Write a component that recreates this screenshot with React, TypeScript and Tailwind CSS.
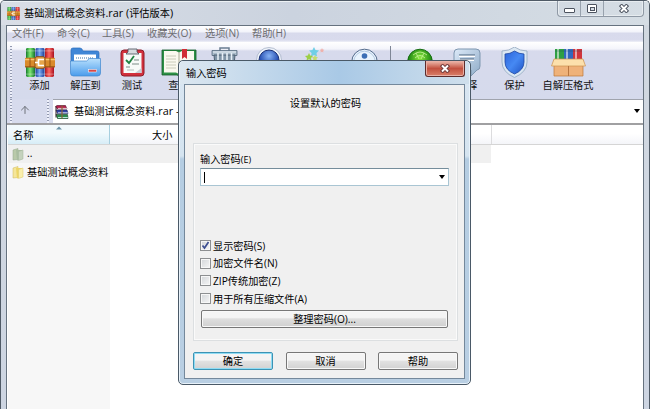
import type { ReactNode } from "react";
import { ArrowUp } from "lucide-react";

const menuItems = [
  { name: "文件(F)", width: "w-[45px]" },
  { name: "命令(C)", width: "w-[45px]" },
  { name: "工具(S)", width: "w-[45px]" },
  { name: "收藏夹(O)", width: "w-[58px]" },
  { name: "选项(N)", width: "w-[47px]" },
  { name: "帮助(H)", width: "w-[45px]" },
];

const options = [
  { label: "显示密码(S)", checked: true },
  { label: "加密文件名(N)", checked: false },
  { label: "ZIP传统加密(Z)", checked: false },
  { label: "用于所有压缩文件(A)", checked: false },
];

function BooksIcon({ className }: { className: string }) {
  return (
    <svg className={className} viewBox="0 0 30 30" preserveAspectRatio="none">
      <defs>
        <linearGradient id="bookGreen">
          <stop offset="0" stopColor="#157a2c" />
          <stop offset=".45" stopColor="#7fe872" />
          <stop offset="1" stopColor="#13752c" />
        </linearGradient>
        <linearGradient id="bookBlue">
          <stop offset="0" stopColor="#1b3f9c" />
          <stop offset=".45" stopColor="#78aaf2" />
          <stop offset="1" stopColor="#1c3c94" />
        </linearGradient>
        <linearGradient id="bookRed">
          <stop offset="0" stopColor="#ad1420" />
          <stop offset=".45" stopColor="#ff6a62" />
          <stop offset="1" stopColor="#a8101f" />
        </linearGradient>
      </defs>
      <rect x="1" y="0" width="9" height="30" rx="1.500" fill="url(#bookGreen)" />
      <rect x="10.5" y="0" width="9" height="30" rx="1.500" fill="url(#bookBlue)" />
      <rect x="20" y="0" width="9" height="30" rx="1.500" fill="url(#bookRed)" />
      <path d="M1 3h28M1 27h28" stroke="#fff" strokeOpacity=".35" />
      <rect y="10" width="30" height="10" rx="1" fill="#d98a2b" />
      <path d="M0 12h30" stroke="#f6c572" strokeWidth="1.5" />
      <path d="M0 19.500h30" stroke="#8f4a12" />
      <path d="M5 10v10M25 10v10" stroke="#93500f" />
      <rect x="10" y="9" width="10" height="12" rx="2" fill="#e6a54a" stroke="#8a4a12" />
      <path d="M19 12h-5.500v6H19M14 15h-4" fill="none" stroke="#fff" strokeWidth="1.600" />
    </svg>
  );
}

function RarIcon({ className }: { className: string }) {
  return (
    <svg className={className} viewBox="0 0 14 14">
      <path d="M.5 1.500 2 .500h8.500l1.500 3.500H2.500z" fill="#b31f4c" stroke="#4a1025" strokeWidth=".6" />
      <path d="M3 3.400h9" stroke="#fff" strokeWidth=".8" />
      <path d="M1 5h11l1 3.500H2.500z" fill="#3346a8" stroke="#141c55" strokeWidth=".6" />
      <path d="M3 7.800h9.800" stroke="#fff" strokeWidth=".8" />
      <path d="M1 9.500h11.500l.5 4H2.500z" fill="#2b8a4d" stroke="#0e3d20" strokeWidth=".6" />
      <path d="M3 12.500h9.800" stroke="#dff" strokeWidth=".8" />
      <path d="M1 1.500v11" stroke="#33202a" strokeWidth="1" />
      <path d="M7 .5v13" stroke="#8d6436" strokeWidth="1.200" />
    </svg>
  );
}

function ExtractIcon() {
  return (
    <svg className="h-[30px] w-[31px]" viewBox="0 0 31 30">
      <defs>
        <linearGradient id="folder" x2="0" y2="1">
          <stop offset="0" stopColor="#b9e0fd" />
          <stop offset="1" stopColor="#4a9cec" />
        </linearGradient>
      </defs>
      <path d="M1 3q0-2 2-2h7q2 0 3 3h14q2 0 2 2v9H1z" fill="#3f86d6" stroke="#2a6dbb" strokeWidth=".7" />
      <path d="M4 7.500h22V16H4z" fill="#fff" />
      <path d="M6 11h18" stroke="#9bb7d1" strokeWidth="2" strokeDasharray="1 1" />
      <path d="M.5 14h16l3-2.500h11v14.500q0 3-3 3h-24q-3 0-3-3z" fill="url(#folder)" stroke="#3f86cf" strokeWidth=".7" />
      <rect x="18.500" y="22.500" width="8" height="2.500" fill="#d84848" stroke="#fff" strokeWidth=".5" />
    </svg>
  );
}

function TestIcon() {
  return (
    <svg className="h-[29px] w-[25px]" viewBox="0 0 25 29">
      <rect x="1" y="2" width="23" height="26" rx="3" fill="#d3303c" stroke="#8e1c28" />
      <rect x="3.500" y="5" width="18" height="20" fill="#f7faf8" />
      <path d="M8 1h9v3l2 2H6l2-2z" fill="#d7dbdf" stroke="#4a4f59" strokeWidth=".8" />
      <path d="m6 12 3 3 5-7" fill="none" stroke="#218343" strokeWidth="1.800" />
      <path d="M14 12h5M12 16h7M6 19h4" stroke="#7d8d88" />
      <path d="M7 22h7" stroke="#b4c0bc" />
      <path d="M21.500 20v5H15z" fill="#c8ced5" />
    </svg>
  );
}

function ViewIcon() {
  return (
    <svg className="h-[28px] w-[36px]" viewBox="0 0 36 28">
      <path d="M1 2h34v25H20l-2 1-2-1H1z" fill="#2e9147" stroke="#145a28" strokeWidth=".8" />
      <path d="M3 3h12l3 1.500V26l-3-1.500H3zM33 3H21l-3 1.500V26l3-1.500h12z" fill="#faf9ef" />
      <path d="M18 4v22" stroke="#a8aa94" />
      <path d="M5 8h10M5 11h10M5 14h10M5 17h10M5 20h10M21 13h10M21 16h10M21 19h10" stroke="#bfc2ad" strokeWidth=".8" />
      <path d="M21 1h5v10l-2.500-2-2.500 2z" fill="#d12d35" />
    </svg>
  );
}

function DeleteIcon() {
  return (
    <svg className="h-[30px] w-[27px]" viewBox="0 0 27 30">
      <path d="M9 4V1h9v3" fill="none" stroke="#6a7d91" strokeWidth="1.500" />
      <path d="M1 3.500h25v5H1z" fill="#a9bac9" stroke="#566b7e" strokeWidth=".8" />
      <path d="M2 5h23" stroke="#eef5fa" />
      <path d="M3 8h21l-2 21H5z" fill="#8296a8" stroke="#4c6072" />
      <path d="M7 6v22M11.500 6v22M16 6v22M20.500 6v22" stroke="#e7eff6" strokeWidth="1.600" />
    </svg>
  );
}

function FindIcon() {
  return (
    <svg className="h-[30px] w-[26px]" viewBox="0 0 26 30">
      <defs>
        <radialGradient id="lens" cy=".3">
          <stop offset="0" stopColor="#86b2f4" />
          <stop offset="1" stopColor="#2149ae" />
        </radialGradient>
      </defs>
      <circle cx="13" cy="13" r="12.500" fill="#eef3fa" stroke="#a6b1c5" strokeWidth=".8" />
      <circle cx="13" cy="13" r="10" fill="url(#lens)" stroke="#1c3276" />
    </svg>
  );
}

function WizardIcon() {
  return (
    <svg className="h-[30px] w-[30px]" viewBox="0 0 30 30">
      <path d="m14 0 1.500 3 3.500.500-2.500 2.500.5 3.500-3-1.600-3 1.600.6-3.500L9 3.500l3.400-.5z" fill="#6fcfe6" />
      <path d="m9 6 1.200 2.500 2.800.4-2 2 .5 2.600L9 12.200l-2.500 1.300.5-2.600-2-2 2.800-.4z" fill="#9ccf45" />
      <path d="m22 1 .7 1.500 1.600.2-1.200 1.200.3 1.600-1.400-.8-1.500.8.3-1.600-1.100-1.200 1.600-.2z" fill="#efb1ac" />
      <path d="m15 8 1 2 2 .3-1.500 1.500.5 2.200-2-1-2 1 .4-2.200L12 10.300l2-.3z" fill="#c5dc6d" />
    </svg>
  );
}

function InfoIcon() {
  return (
    <svg className="h-[29px] w-[27px]" viewBox="0 0 27 29">
      <circle cx="13.500" cy="14" r="12.800" fill="#e9f3fd" stroke="#51698a" />
      <circle cx="13.500" cy="14" r="10.800" fill="none" stroke="#b4cbe4" />
      <circle cx="13.500" cy="8" r="2.800" fill="#3c6fb5" />
      <path d="M11 13h5v11h-5z" fill="#3c6fb5" />
    </svg>
  );
}

function ScanIcon() {
  return (
    <svg className="h-[29px] w-[26px]" viewBox="0 0 26 29">
      <defs>
        <radialGradient id="virus" cy=".35">
          <stop offset="0" stopColor="#8be83f" />
          <stop offset="1" stopColor="#17820f" />
        </radialGradient>
      </defs>
      <circle cx="13" cy="13.500" r="12.300" fill="url(#virus)" stroke="#176d13" />
      <path d="M6 7q7-6 14 0M8 10q5-5 10 0M9 5l3 6M17 5l-3 6" fill="none" stroke="#c9f59a" strokeWidth=".8" />
    </svg>
  );
}

function CommentIcon() {
  return (
    <svg className="h-[30px] w-[28px]" viewBox="0 0 28 30">
      <defs>
        <linearGradient id="note" x2="1" y2="1">
          <stop offset="0" stopColor="#dce9f8" />
          <stop offset="1" stopColor="#8facc8" />
        </linearGradient>
      </defs>
      <path d="M5 2h18q4 0 4 4v13q0 4-3 4l-6 6v-6H5q-4 0-4-4V6q0-4 4-4z" fill="url(#note)" stroke="#7f97b0" />
      <path d="M6 9h16M7 13h14" stroke="#fff" strokeWidth="2" />
      <path d="M6 8h16M7 12h14" stroke="#4a6480" strokeWidth="1.100" />
    </svg>
  );
}

function ProtectIcon() {
  return (
    <svg className="h-[31px] w-[27px]" viewBox="0 0 27 31">
      <defs>
        <linearGradient id="shield" x2="1" y2="1">
          <stop offset="0" stopColor="#2b63d9" />
          <stop offset=".5" stopColor="#4689f3" />
          <stop offset="1" stopColor="#2053c4" />
        </linearGradient>
      </defs>
      <path d="M13.500 0Q19 4 26 4v11q0 10-12.500 15.500Q1 25 1 15V4q7 0 12.500-4z" fill="#dbe7f2" stroke="#93a8bf" strokeWidth=".8" />
      <path d="M13.500 4Q18 7 23 7v8q0 8-9.500 12Q4 23 4 15V7q5 0 9.500-3z" fill="url(#shield)" stroke="#1e46a2" strokeWidth=".8" />
    </svg>
  );
}

function SfxIcon() {
  return (
    <svg className="h-[29px] w-[35px]" viewBox="0 0 35 29">
      <rect x="4" y="1" width="9" height="12" fill="#2f9f43" />
      <rect x="13" y="1" width="9" height="12" fill="#3268bd" />
      <rect x="22" y="1" width="9" height="12" fill="#cf343c" />
      <path d="M7 1v10M16 1v10M25 1v10" stroke="#fff" strokeOpacity=".55" strokeWidth="2" />
      <path d="M4 3h27" stroke="#1e4459" strokeOpacity=".35" />
      <path d="M3 12h29v16H3z" fill="#efb27a" stroke="#bd7638" strokeWidth=".7" />
      <path d="M3 11h29l2.500 7H.5z" fill="#fce0ac" stroke="#cb914f" strokeWidth=".7" />
      <path d="M17.500 18v10" stroke="#b87641" />
    </svg>
  );
}

function FolderIcon({ up }: { up?: boolean }) {
  return (
    <svg className="h-[13px] w-[12px]" viewBox="0 0 12 13">
      <path d="M1 2 6 .500v11L1 12z" fill={up ? "#b9caaa" : "#f5e69a"} stroke={up ? "#91a58a" : "#cdb75b"} strokeWidth=".5" />
      <path d="M4 2h6v9l-5 1.500z" fill={up ? "#a9bda0" : "#ecd565"} />
      <path d="M6.500 3.500 11 2v9l-4.500 1.500z" fill={up ? "#c4d2bd" : "#faefad"} stroke={up ? "#a3b69b" : "#dcc86a"} strokeWidth=".5" />
    </svg>
  );
}

function CloseGlyph({ className, outline, fill = "#fff" }: { className: string; outline: string; fill?: string }) {
  return (
    <svg className={className} viewBox="0 0 10 9">
      <path d="M1.300 .8 8.700 8.200M8.700 .8 1.300 8.200" stroke={outline} strokeWidth="3.800" />
      <path d="M2 1.500 8 7.500M8 1.500 2 7.500" stroke={fill} strokeWidth="1.900" />
    </svg>
  );
}

function Tool({ icon, label, width }: { icon: ReactNode; label?: string; width: string }) {
  return (
    <div className={`${width} flex shrink-0 flex-col items-center`}>
      <div className="flex h-[32px] items-center justify-center">{icon}</div>
      {label && <span className="text-[10.2px] leading-[14px] text-[#111]">{label}</span>}
    </div>
  );
}

function Grip({ className }: { className: string }) {
  return <div className={`${className} w-[2px] shrink-0 bg-[repeating-linear-gradient(#9299b0_0_1px,#eef0fa_1px_3px)]`} />;
}

function DialogButton({ children, primary }: { children: ReactNode; primary?: boolean }) {
  return (
    <button
      className={`h-[18px] w-[80px] rounded-[2px] border bg-linear-to-b from-[#f4f4f4] from-45% via-[#e2e2e2] via-50% to-[#d2d2d2] leading-[16px] ${
        primary ? "border-[#3c93b4] shadow-[inset_0_0_0_1px_#8fdcf4]" : "border-[#777] shadow-[inset_0_0_0_1px_#f8f8f8]"
      }`}
    >
      {children}
    </button>
  );
}

function PasswordDialog() {
  return (
    <div className="absolute top-[59px] left-[177px] flex h-[325px] w-[293px] flex-col rounded-[5px] border border-[#4a5967] bg-[linear-gradient(#d9e6f2_0,#d5e4f0_95px,#b5cde2_98px,#b9cfe3_100%)] px-[5px] pb-[5px] shadow-[inset_0_0_0_1px_#e8f2fa]">
      <div className="mx-[-4px] flex h-[23px] shrink-0 justify-between rounded-t-[4px] bg-linear-to-r from-[#dce7f0] via-[#a9c9e6] via-55% to-[#cfdfec] pr-[4px] pl-[6px]">
        <span className="pt-[4px] text-[10.2px] leading-[16px]">输入密码</span>
        <button className="flex h-[16px] w-[40px] items-center justify-center rounded-b-[3px] border border-t-0 border-[#5c2c2c] bg-linear-to-b from-[#e5a698] from-10% via-[#c2503f] via-50% to-[#d9806a] shadow-[inset_0_0_0_1px_#e9b0a5]">
          <CloseGlyph className="h-[9px] w-[10px]" outline="#703c3c" />
        </button>
      </div>

      <div className="flex flex-1 flex-col border border-[#74889b] bg-[#f0f0f0] pr-[6px] pl-[8px]">
        <p className="h-[58px] pt-[10px] text-center text-[10.200px] leading-[16px]">设置默认的密码</p>

        {/* Password options */}
        <div className="h-[198px] border border-[#dcdfe1] px-[6px] pt-[8px] shadow-[inset_0_0_0_1px_#fafafa]">
          <p className="h-[16px] leading-[14px]">
            输入密码<span className="text-[9px]">(E)</span>
          </p>
          <div className="flex h-[18px] w-[249px] items-center justify-between border border-[#a9c5d3] border-t-[#758d9b] bg-white pr-[3px] pl-[3px]">
            <span className="h-[11px] w-px bg-black" />
            <span className="h-0 w-0 border-x-[3.500px] border-t-[4px] border-x-transparent border-t-black" />
          </div>

          <div className="mt-[51px] flex flex-col">
            {options.map((option) => (
              <label key={option.label} className="flex h-[17.6px] items-center gap-[2px]">
                <span className="flex h-[11px] w-[11px] items-center justify-center border border-[#8d8f91] bg-linear-to-br from-[#d3d6d9] to-[#f6f6f6] shadow-[inset_0_0_0_1px_#f7f7f7]">
                  {option.checked && (
                    <svg className="h-[9px] w-[9px]" viewBox="0 0 9 9">
                      <path d="m1.500 4.500 2 2.500L7.500 1" fill="none" stroke="#3d4f91" strokeWidth="1.700" />
                    </svg>
                  )}
                </span>
                <span className="leading-[16px]">{option.label}</span>
              </label>
            ))}
          </div>

          <button className="mt-[3px] ml-px h-[18px] w-[247px] rounded-[2px] border border-[#777] bg-linear-to-b from-[#f4f4f4] from-40% via-[#dedede] via-50% to-[#d0d0d0] leading-[15px] shadow-[inset_0_0_0_1px_#f8f8f8]">
            整理密码(O)...
          </button>
        </div>

        <div className="mt-[11px] flex justify-between">
          <DialogButton primary>确定</DialogButton>
          <DialogButton>取消</DialogButton>
          <DialogButton>帮助</DialogButton>
        </div>
      </div>
    </div>
  );
}

export default function App() {
  return (
    <div className="relative flex h-[409px] w-[650px] flex-col overflow-hidden rounded-t-[5px] border-x border-t border-[#4f5a66] bg-linear-to-b from-[#d1d8e0] to-[#cdd5e2] font-['Open_Sans','Noto_Sans_CJK_SC',sans-serif] text-[10.200px] whitespace-nowrap text-black">
      {/* Title bar */}
      <header className="flex h-[24px] shrink-0 justify-between bg-linear-to-r from-[#d9dee6] via-[#cbd3df] via-45% to-[#d5dde4] pr-[5px] pl-[6px] shadow-[inset_0_1px_0_#edf2f5]">
        <div className="flex items-center gap-[4px]">
          <BooksIcon className="h-[13px] w-[13px]" />
          <h1 className="text-[10.200px] leading-[18px]">
            基础测试概念资料<span className="text-[10.800px]">.rar (</span>评估版本<span className="text-[10.800px]">)</span>
          </h1>
        </div>
        <div className="flex h-[16px] w-[87px] rounded-b-[4px] border border-t-0 border-[#8f99a5] shadow-[inset_0_0_0_1px_#e7ecf0]">
          <div className="flex w-[23px] items-end justify-center border-r border-[#98a2ad] pb-[3px]">
            <span className="h-[5px] w-[11px] rounded-[1px] border border-[#4c535f] bg-white" />
          </div>
          <div className="flex w-[23px] items-center justify-center border-r border-[#98a2ad]">
            <span className="flex h-[9px] w-[10px] items-center justify-center rounded-[1px] border border-[#4c535f] bg-white">
              <span className="h-[4px] w-[5px] border border-[#4c535f] bg-[#d5dce4]" />
            </span>
          </div>
          <div className="flex flex-1 items-center justify-center">
            <CloseGlyph className="h-[9px] w-[10px]" outline="#4c535f" />
          </div>
        </div>
      </header>

      <div className="mr-[5px] ml-[5px] flex flex-1 flex-col border-x border-t border-[#66727f] bg-white">
        {/* Menu */}
        <nav className="flex h-[16px] shrink-0 bg-[linear-gradient(#fff_0,#f2f3fa_6px,#d8daec_7px,#d9dbed_14px,#f0f1f8_16px)] pl-[5px] text-[#6d6d70]">
          {menuItems.map((item) => (
            <span key={item.name} className={`${item.width} shrink-0 leading-[15px]`}>
              {item.name}
            </span>
          ))}
        </nav>

        {/* Toolbar */}
        <div className="flex h-[57px] shrink-0 bg-[linear-gradient(#fff_0,#f4f5fb_7px,#d7daec_9px,#d5daec_100%)] pt-[4px] pl-[3px]">
          <Grip className="mr-[5px] h-[52px]" />
          <Tool icon={<BooksIcon className="h-[29px] w-[30px]" />} label="添加" width="w-[45px]" />
          <Tool icon={<ExtractIcon />} label="解压到" width="w-[47px]" />
          <Tool icon={<TestIcon />} label="测试" width="w-[46px]" />
          <Tool icon={<ViewIcon />} label="查看" width="w-[47px]" />
          <Tool icon={<DeleteIcon />} width="w-[45px]" />
          <Tool icon={<FindIcon />} width="w-[44px]" />
          <Tool icon={<WizardIcon />} width="w-[48px]" />
          <Tool icon={<InfoIcon />} width="w-[50px]" />
          <div className="mr-[6px] ml-px h-[48px] w-px bg-[#7f8696]" />
          <Tool icon={<ScanIcon />} width="w-[45px]" />
          <Tool icon={<CommentIcon />} label="注释" width="w-[50px]" />
          <Tool icon={<ProtectIcon />} label="保护" width="w-[45px]" />
          <Tool icon={<SfxIcon />} label="自解压格式" width="w-[62px]" />
        </div>

        {/* Address bar */}
        <div className="flex h-[24px] shrink-0 bg-[#d7dbed] pl-[3px]">
          <Grip className="h-[24px]" />
          <div className="flex w-[35px] items-center justify-center">
            <ArrowUp className="mr-[9px] mb-[2px] text-[#6e727b]" size={12} strokeWidth={2} />
          </div>
          <Grip className="mr-[4px] h-[24px]" />
          <div className="flex flex-1 items-center border-t border-[#a0a4ad] bg-white pr-[3px] pl-[2px]">
            <RarIcon className="h-[14px] w-[14px]" />
            <span className="ml-[5px]">
              基础测试概念资料<span className="text-[10.800px]">.rar -</span>
            </span>
            <span className="mb-[2px] ml-auto h-0 w-0 border-x-[3px] border-t-[4px] border-x-transparent border-t-black" />
          </div>
        </div>

        {/* File list */}
        <div className="flex flex-1 flex-col border-t-2 border-[#a0a0a2] pl-px">
          <div className="flex h-[20px] shrink-0 border-b border-[#d5d5d5] bg-linear-to-b from-white from-45% to-[#f4f5f9] leading-[20px]">
            <div className="relative w-[102px] border-r border-[#a7cfdf] bg-linear-to-b from-[#f2fafd] from-40% to-[#d7edf7] pl-[5px]">
              名称
              <svg className="absolute top-[1px] left-[48px] h-[4px] w-[6px]" viewBox="0 0 6 4">
                <path d="M0 3.500 3 .500 6 3.500z" fill="#6b93a8" />
              </svg>
            </div>
            <div className="w-[382px] border-r border-[#dcdcde] pl-[42px]">大小</div>
          </div>
          <div className="h-[18px] w-[483px] shrink-0 bg-[#f0f0f0]">
            <div className="flex h-[18px] items-center gap-[3px] pl-[4px]">
              <FolderIcon up />
              <span>..</span>
            </div>
          </div>
          <div className="w-[102px] flex-1 bg-[#f7f7f7]">
            <div className="flex h-[19px] items-center gap-[3px] pl-[4px]">
              <FolderIcon />
              <span>基础测试概念资料</span>
            </div>
          </div>
        </div>
      </div>

      <PasswordDialog />
    </div>
  );
}
